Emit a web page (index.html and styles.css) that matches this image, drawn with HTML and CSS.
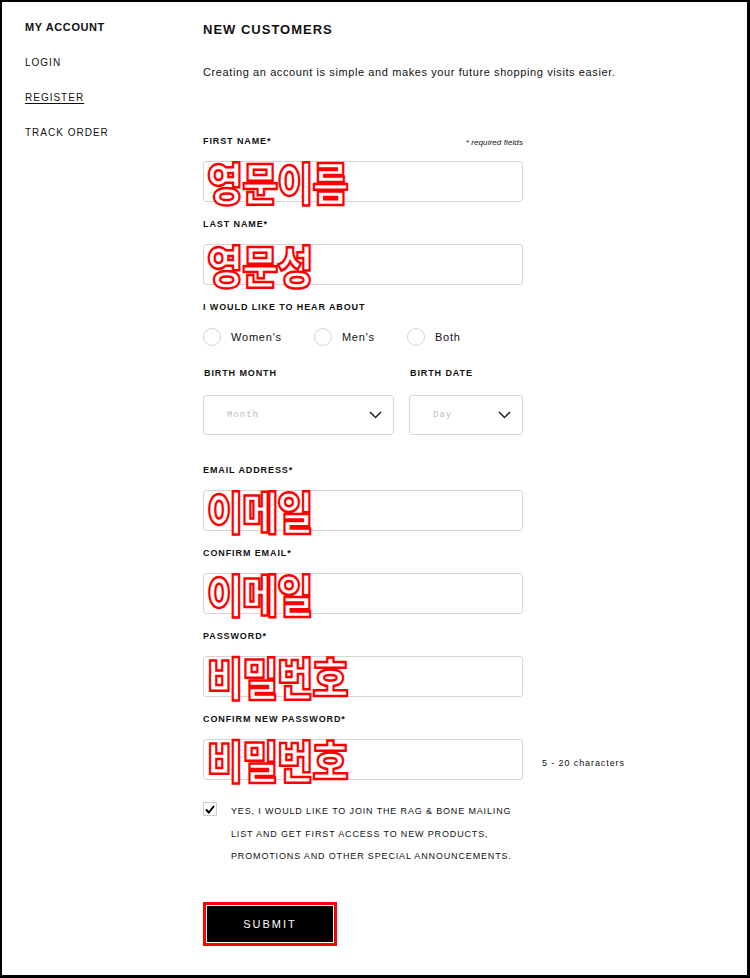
FILE: index.html
```html
<!DOCTYPE html>
<html lang="en">
<head>
  <meta charset="UTF-8" />
  <meta name="viewport" content="width=device-width, initial-scale=1.0" />
  <title>Register - My Account</title>
  <link rel="stylesheet" href="styles.css">
</head>
<body>
  <div class="page">
    <nav class="sidebar">
      <h2>MY ACCOUNT</h2>
      <a href="#">LOGIN</a>
      <a href="#" class="active">REGISTER</a>
      <a href="#">TRACK ORDER</a>
    </nav>

    <main class="content">
      <h1>NEW CUSTOMERS</h1>
      <p class="intro">Creating an account is simple and makes your future shopping visits easier.</p>

      <div class="field first">
        <div class="label-row">
          <label>FIRST NAME*</label>
          <span class="required">* required fields</span>
        </div>
        <div class="box"><span class="note-ko">영문이름</span></div>
      </div>

      <div class="field">
        <label>LAST NAME*</label>
        <div class="box"><span class="note-ko">영문성</span></div>
      </div>

      <div class="field">
        <label>I WOULD LIKE TO HEAR ABOUT</label>
        <div class="radios">
          <span class="radio"><i></i>Women's</span>
          <span class="radio"><i></i>Men's</span>
          <span class="radio"><i></i>Both</span>
        </div>
      </div>

      <div class="birth">
        <div class="birth-col month">
          <label>BIRTH MONTH</label>
          <div class="select"><span>Month</span>
            <svg width="13" height="8" viewBox="0 0 13 8"><polyline points="1,1 6.5,6.5 12,1" fill="none" stroke="#222" stroke-width="1.5"/></svg>
          </div>
        </div>
        <div class="birth-col day">
          <label>BIRTH DATE</label>
          <div class="select"><span>Day</span>
            <svg width="13" height="8" viewBox="0 0 13 8"><polyline points="1,1 6.5,6.5 12,1" fill="none" stroke="#222" stroke-width="1.5"/></svg>
          </div>
        </div>
      </div>

      <div class="field email">
        <label>EMAIL ADDRESS*</label>
        <div class="box"><span class="note-ko">이메일</span></div>
      </div>

      <div class="field">
        <label>CONFIRM EMAIL*</label>
        <div class="box"><span class="note-ko">이메일</span></div>
      </div>

      <div class="field">
        <label>PASSWORD*</label>
        <div class="box"><span class="note-ko">비밀번호</span></div>
      </div>

      <div class="field">
        <label>CONFIRM NEW PASSWORD*</label>
        <div class="box-row">
          <div class="box"><span class="note-ko">비밀번호</span></div>
          <span class="hint">5 - 20 characters</span>
        </div>
      </div>

      <div class="optin">
        <span class="check">
          <svg width="10" height="9" viewBox="0 0 10 9"><polyline points="1,4.5 3.8,7.5 9,1" fill="none" stroke="#000" stroke-width="2"/></svg>
        </span>
        <p>YES, I WOULD LIKE TO JOIN THE RAG &amp; BONE MAILING LIST AND GET FIRST ACCESS TO NEW PRODUCTS, PROMOTIONS AND OTHER SPECIAL ANNOUNCEMENTS.</p>
      </div>

      <div class="submit-wrap">
        <button type="button">SUBMIT</button>
      </div>
    </main>
  </div>
</body>
</html>
```

FILE: styles.css
```css
body {
  margin: 0;
  padding: 0;
  font-family: "Liberation Sans", Arial, sans-serif;
  color: #111;
  background: #fff;
}

.page {
  display: flex;
  width: 750px;
  height: 978px;
  box-sizing: border-box;
  border-style: solid;
  border-color: #000;
  border-width: 2px 3px 3px 2px;
  overflow: hidden;
}

/* SIDEBAR */
.sidebar {
  width: 201px;
  flex-shrink: 0;
  box-sizing: border-box;
  padding: 18px 0 0 23px;
  display: flex;
  flex-direction: column;
}

.sidebar h2 {
  margin: 0;
  font-size: 11px;
  line-height: 14px;
  letter-spacing: 0.6px;
  font-weight: 700;
}

.sidebar a {
  color: #111;
  text-decoration: none;
  font-size: 10px;
  line-height: 14px;
  letter-spacing: 1px;
  margin-top: 21px;
  align-self: flex-start;
}

.sidebar a:nth-of-type(1) {
  margin-top: 22px;
}

.sidebar a.active {
  text-decoration: underline;
  text-underline-offset: 2px;
}

/* CONTENT */
.content {
  width: 320px;
  padding-top: 20px;
}

h1 {
  margin: 0;
  font-size: 13px;
  line-height: 16px;
  letter-spacing: 1px;
  font-weight: 700;
}

.intro {
  margin: 26px 0 0;
  font-size: 11px;
  line-height: 16px;
  letter-spacing: 0.6px;
  white-space: nowrap;
}

.field {
  margin-top: 16px;
}

.field.first {
  margin-top: 55px;
}

.field.email {
  margin-top: 29px;
}

label {
  display: block;
  font-size: 9px;
  line-height: 12px;
  font-weight: 700;
  letter-spacing: 0.9px;
}

.label-row {
  display: flex;
  justify-content: space-between;
  align-items: flex-end;
}

.required {
  font-size: 8px;
  font-style: italic;
  letter-spacing: 0.1px;
  line-height: 12px;
  position: relative;
  top: 2px;
}

.box {
  margin-top: 14px;
  height: 41px;
  width: 320px;
  flex-shrink: 0;
  box-sizing: border-box;
  border: 1px solid #d6d6d6;
  border-radius: 3px;
  padding-left: 3px;
  overflow: visible;
}

.box-row {
  display: flex;
  align-items: flex-end;
}

.hint {
  margin-left: 19px;
  font-size: 9px;
  letter-spacing: 0.9px;
  line-height: 12px;
  padding-bottom: 11px;
  white-space: nowrap;
}

/* anotação em vermelho sobre o campo */
.note-ko {
  display: block;
  font-family: "Noto Sans CJK KR", sans-serif;
  font-weight: 900;
  font-size: 45px;
  line-height: 45px;
  letter-spacing: -1px;
  color: #fff;
  -webkit-text-stroke: 2.5px #ff0000;
  margin-top: -3px;
  white-space: nowrap;
  transform: scaleX(0.87);
  transform-origin: left center;
}

/* RADIOS */
.radios {
  display: flex;
  gap: 32px;
  margin-top: 15px;
}

.radio {
  display: flex;
  align-items: center;
  font-size: 11px;
  letter-spacing: 0.8px;
  line-height: 18px;
}

.radio i {
  width: 18px;
  height: 18px;
  box-sizing: border-box;
  border: 1.5px solid #d6d6d6;
  border-radius: 50%;
  margin-right: 10px;
}

/* BIRTH */
.birth {
  display: flex;
  gap: 15px;
  margin-top: 21px;
}

.birth-col.month {
  width: 191px;
}

.birth-col.day {
  width: 114px;
}

.birth-col label {
  padding-left: 1px;
}

.select {
  margin-top: 16px;
  height: 40px;
  box-sizing: border-box;
  border: 1px solid #d6d6d6;
  border-radius: 3px;
  display: flex;
  align-items: center;
  justify-content: space-between;
  padding: 0 11px 0 23px;
}

.select span {
  font-family: "Liberation Mono", monospace;
  font-size: 9px;
  letter-spacing: 1px;
  color: #bbb;
}

/* OPT-IN */
.optin {
  display: flex;
  margin-top: 22px;
}

.check {
  width: 14px;
  height: 14px;
  box-sizing: border-box;
  border: 1px solid #ccc;
  display: flex;
  align-items: center;
  justify-content: center;
  margin-top: 0;
  flex-shrink: 0;
}

.optin p {
  margin: 0 0 0 14px;
  font-size: 9px;
  line-height: 22.5px;
  letter-spacing: 0.85px;
  width: 300px;
  margin-top: -2px;
}

/* SUBMIT */
.submit-wrap {
  margin-top: 34px;
  width: 134px;
  height: 44px;
  box-sizing: border-box;
  border: 3px solid #ff0000;
  padding: 1px;
}

.submit-wrap button {
  display: block;
  width: 100%;
  height: 100%;
  border: none;
  background: #000;
  color: #fff;
  font-family: "Liberation Sans", Arial, sans-serif;
  font-size: 11px;
  letter-spacing: 2px;
  cursor: pointer;
}
```
